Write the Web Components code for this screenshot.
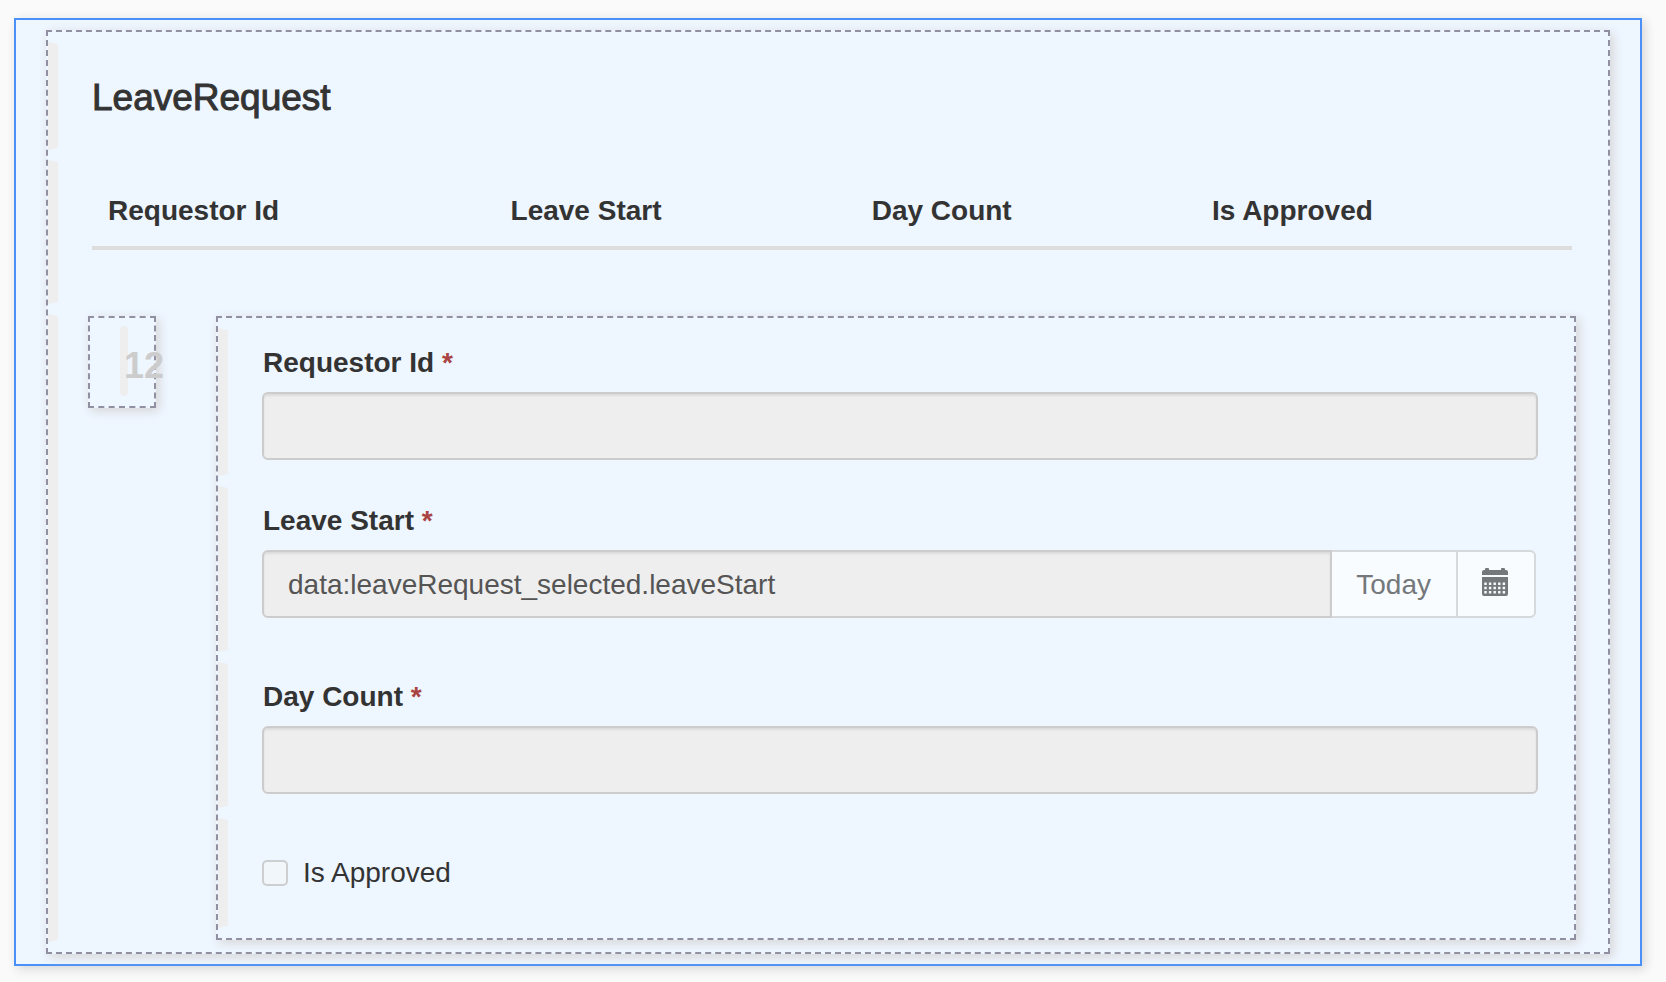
<!DOCTYPE html>
<html lang="en">
<head>
<meta charset="utf-8">
<title>LeaveRequest</title>
<style>
body{margin:0;background:#fafafa;color:#333;font:28px/40px "Liberation Sans",Arial,sans-serif;--shadow:3px 3px 10px #d6d6d6}
</style>
</head>
<body>
<leave-designer></leave-designer>
<script>
const define = (name, html) => customElements.define(name, class extends HTMLElement {
  constructor() {
    super();
    this.attachShadow({mode: "open"}).innerHTML = "<style>*{box-sizing:border-box}</style>" + html;
  }
});

// Dashed container holding designer sections
define("dashed-box", `<style>
:host{display:flex;flex-direction:column;gap:10px;box-sizing:border-box;padding:10px 0;border:2px dashed #9190a2;box-shadow:var(--shadow)}
</style><slot></slot>`);

// Section with a grey guide at its left edge
define("guide-section", `<style>
:host{display:flex;align-items:stretch}
.bar{flex:none;width:10px;background:#eee;clip-path:polygon(0 0,100% 2px,100% calc(100% - 2px),0 100%)}
.body{flex:1;min-width:0;padding:var(--pad,14px 36px 14px 34px)}
</style><div class="bar"></div><div class="body"><slot></slot></div>`);

define("request-table", `<style>
:host{display:block}
table{width:100%;border-collapse:separate;border-spacing:0;table-layout:fixed}
th{text-align:left;font-weight:700;padding:17px 16px 15px;border-bottom:4px solid #ddd;white-space:nowrap}
th:nth-child(1){width:27.2%}
th:nth-child(2){width:24.4%}
th:nth-child(3){width:23%}
</style><table><thead><tr><th scope="col">Requestor Id</th><th scope="col">Leave Start</th><th scope="col">Day Count</th><th scope="col">Is Approved</th></tr></thead></table>`);

define("row-number", `<style>
:host{display:flex;box-sizing:border-box;flex:none;width:68px;height:92px;border:2px dashed #9190a2;box-shadow:var(--shadow);padding:8px 0 10px 30px}
i{flex:none;width:8px;height:70px;border-radius:4px;background:#eee}
b{font-size:36px;line-height:40px;color:#ccc;padding-top:20px;margin-left:-4px}
</style><i></i><b><slot></slot></b>`);

class TextField extends HTMLElement {
  constructor() {
    super();
    this.attachShadow({mode: "open"}).innerHTML = `<style>
*{box-sizing:border-box}
:host{display:block}
label{display:block;font-weight:700;padding:1px 0 0 1px;margin-bottom:9px}
span{color:#a94442}
.row{display:flex}
input{flex:1;min-width:0;height:68px;margin:0;padding:2px 24px 0;border:2px solid #ccc;border-radius:6px;background:#eee;color:#555;font:inherit;box-shadow:inset 0 2px 2px rgba(0,0,0,.075)}
::slotted(*){flex:none}
:host([group]) .row{margin-right:2px}
:host([group]) input{border-radius:6px 0 0 6px}
</style><label for="f"></label><div class="row"><input id="f" type="text" readonly><slot></slot></div>`;
    const label = this.shadowRoot.querySelector("label");
    label.textContent = this.getAttribute("label") + " ";
    const star = document.createElement("span");
    star.textContent = "*";
    label.append(star);
    this.shadowRoot.querySelector("input").value = this.getAttribute("value") || "";
  }
}
customElements.define("text-field", TextField);

define("date-buttons", `<style>
:host{display:flex}
button{height:68px;margin:0;border:2px solid #d6d9db;border-left:0;background:#f9fcff;color:#74787b;font:inherit;padding:2px 25px 0 24px}
button:last-child{border-radius:0 6px 6px 0;padding:0 26px 4px 24px}
svg{display:block;fill:currentColor}
</style><button type="button">Today</button><button type="button" aria-label="Open calendar"><svg width="26" height="28" viewBox="0 0 26 28"><path d="M0 7V4q0-2 2-2h1V1q0-1 1-1h2q1 0 1 1v1h12V1q0-1 1-1h2q1 0 1 1v1h1q2 0 2 2v3zM0 9h26v17q0 2-2 2H2q-2 0-2-2z"/><path fill="#f9fcff" d="M2.3 14.5h2.4v2.4H2.3zm4.6 0h2.4v2.4H6.9zm4.6 0h2.4v2.4h-2.4zm4.6 0h2.4v2.4h-2.4zm4.6 0h2.4v2.4h-2.4zM2.3 18.8h2.4v2.4H2.3zm4.6 0h2.4v2.4H6.9zm4.6 0h2.4v2.4h-2.4zm4.6 0h2.4v2.4h-2.4zm4.6 0h2.4v2.4h-2.4zM2.3 23.1h2.4v2.4H2.3zm4.6 0h2.4v2.4H6.9zm4.6 0h2.4v2.4h-2.4zm4.6 0h2.4v2.4h-2.4zm4.6 0h2.4v2.4h-2.4z"/></svg></button>`);

define("check-field", `<style>
:host{display:block}
label{display:flex;align-items:center;gap:15px}
input{appearance:none;flex:none;width:26px;height:26px;margin:0;border:2px solid #ccced0;border-radius:5px;background:#f1f6fa}
</style><label><input type="checkbox"><slot></slot></label>`);

define("leave-designer", `<style>
:host{display:block;margin:18px 24px 16px 14px;padding:10px 30px;border:2px solid #4a90f7;background:#eef6ff;box-shadow:var(--shadow)}
h3{margin:0;font-size:37px;line-height:40px;font-weight:400;-webkit-text-stroke:1px #333}
.title{--pad:36px 36px 32px 34px}
.head{--pad:14px 36px 54px 34px}
.rows{--pad:2px 32px 2px 30px}
.split{display:flex;gap:60px;align-items:flex-start}
.split dashed-box{flex:1;min-width:0}
.f1{--pad:14px 36px 16px 34px}
.f2{--pad:14px 36px 34px 34px}
.f3{--pad:14px 36px 14px 34px}
.f4{--pad:35px 36px 35px 34px}
</style>
<dashed-box>
<guide-section class="title"><h3>LeaveRequest</h3></guide-section>
<guide-section class="head"><request-table></request-table></guide-section>
<guide-section class="rows"><div class="split">
<row-number>12</row-number>
<dashed-box>
<guide-section class="f1"><text-field label="Requestor Id"></text-field></guide-section>
<guide-section class="f2"><text-field group label="Leave Start" value="data:leaveRequest_selected.leaveStart"><date-buttons></date-buttons></text-field></guide-section>
<guide-section class="f3"><text-field label="Day Count"></text-field></guide-section>
<guide-section class="f4"><check-field>Is Approved</check-field></guide-section>
</dashed-box>
</div></guide-section>
</dashed-box>`);
</script>
</body>
</html>
